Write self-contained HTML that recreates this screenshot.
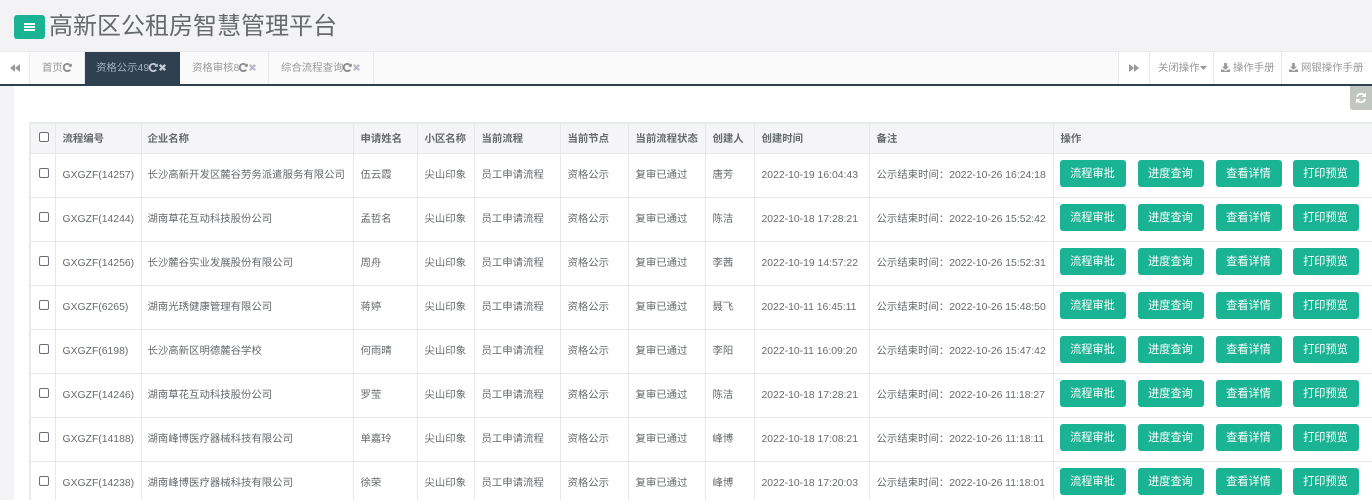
<!DOCTYPE html>
<html lang="zh"><head><meta charset="utf-8"><title>高新区公租房智慧管理平台</title>
<style>
*{box-sizing:border-box}
html,body{margin:0;padding:0;width:1372px;height:500px;overflow:hidden;background:#f3f3f5}
#wrap{position:relative;width:1372px;height:500px;overflow:hidden;background:#f3f3f5;font-family:"Liberation Sans","Noto Sans CJK SC",sans-serif;color:#676a6c}
.abs{position:absolute}
#menu{left:14px;top:15px;width:31px;height:24px;background:#1ab394;border-radius:3px}
#menu i{position:absolute;left:10px;width:11px;height:2px;background:#fff}
#title{left:49px;top:9px;font-size:24px;line-height:36px;color:#676a6c;white-space:nowrap}
#bar{left:0;top:51px;width:1372px;height:35px;background:#fafafa;border-top:1px solid #e7eaec;border-bottom:2px solid #2f4050}
.t{position:absolute;top:0;height:32px;line-height:33px;font-size:10.4px;color:#999;border-right:1px solid #e7eaec;white-space:nowrap}
.t.n{text-align:center}
.t svg{vertical-align:-1px}
#main{left:14px;top:86px;width:1358px;height:414px;background:#fff}
#rf{left:1350px;top:86px;width:22px;height:24px;background:#c2c6c2;border-radius:0 0 0 3px}
table{position:absolute;left:29px;top:122px;width:1400px;table-layout:fixed;border-collapse:collapse;font-size:10.4px;color:#676a6c}
td,th{border:1px solid #e7e7e7;padding:0 0 4px 7px;text-align:left;white-space:nowrap;overflow:hidden;font-weight:400;height:44px}
td.l{padding-bottom:0}
td.a{padding:0 0 2px 6px}
td:first-child,th:first-child{padding:0 0 2px 6px}
td:nth-child(3),th:nth-child(3){padding-left:6px}
tr:first-child th{height:30px;background:#f5f5f7;font-weight:700;border-top:2px solid #e7eaec;padding-bottom:2px}
td:first-child,th:first-child{border-left:2px solid #e7eaec}
.c{display:block;position:relative;top:0;width:10px;height:10px;border:1px solid #6d6d78;border-radius:2px;background:#fff;margin:-3px 0 0 2px}
th .c{top:1px}
b.b{display:inline-block;width:66px;height:27px;line-height:28px;margin-right:12px;background:#1ab394;color:#fff;font-size:11.2px;font-weight:400;text-align:center;border-radius:3px;vertical-align:middle;position:relative;top:-1px}
b.b:nth-child(3){margin-right:11px}
</style></head><body>
<div id="wrap">
<div class="abs" id="main"></div>
<div class="abs" id="menu"><i style="top:8px"></i><i style="top:11px"></i><i style="top:14px"></i></div>
<div class="abs" id="title">高新区公租房智慧管理平台</div>
<svg width="0" height="0" style="position:absolute"><defs>
<symbol id="rp" viewBox="0 0 10 10"><path d="M8 2.6A4 4 0 1 0 8 7.4" fill="none" stroke="currentColor" stroke-width="2"/><path d="M6 4.2L9.800 4.200 9.800.4z" fill="currentColor"/></symbol>
<symbol id="x" viewBox="0 0 10 10"><path d="M2 2L8 8M8 2L2 8" fill="none" stroke="currentColor" stroke-width="2.600"/></symbol>
<symbol id="dl" viewBox="0 0 10 10"><path d="M3.500 0h3v4H9L5 7.600 1 4h2.500zM0 7.200h2.300L5 9l2.700-1.800H10V10H0z" fill="currentColor"/></symbol>
</defs></svg>
<div class="abs" id="bar">
<div class="t n" style="left:0;width:30px;background:#fff"><svg width="10" height="8" viewBox="0 0 10 8"><path d="M5 0v8L0 4zM10 0v8L5 4z" fill="#999"/></svg></div>
<div class="t" style="left:30px;width:55px;padding-left:12px">首页<svg width="9" height="9" style="color:#888"><use href="#rp"/></svg></div>
<div class="t" style="left:85px;width:95px;padding-left:11px;background:#2f4050;color:#a7b1c2;border-right:0">资格公示49<svg width="9" height="9" style="color:#c4ccd8"><use href="#rp"/></svg><svg width="9" height="9" style="color:#c4ccd8"><use href="#x"/></svg></div>
<div class="t" style="left:180px;width:89px;padding-left:12px">资格审核8<svg width="9" height="9" style="color:#888"><use href="#rp"/></svg><svg width="9" height="9" style="color:#bbc"><use href="#x"/></svg></div>
<div class="t" style="left:269px;width:105px;padding-left:12px">综合流程查询<svg width="9" height="9" style="color:#888"><use href="#rp"/></svg><svg width="9" height="9" style="color:#bbc"><use href="#x"/></svg></div>
<div class="t n" style="left:1118px;width:32px;border-left:1px solid #e7eaec;background:#fff"><svg width="10" height="8" viewBox="0 0 10 8"><path d="M0 0v8l5-4zM5 0v8l5-4z" fill="#999"/></svg></div>
<div class="t" style="left:1150px;width:64px;padding-left:8px;background:#fff">关闭操作<svg width="7" height="4" viewBox="0 0 7 4" style="vertical-align:1px"><path d="M0 0h7L3.500 4z" fill="#999"/></svg></div>
<div class="t" style="left:1214px;width:68px;padding-left:7px;background:#fff"><svg width="9" height="9" style="margin-right:3px"><use href="#dl"/></svg>操作手册</div>
<div class="t" style="left:1282px;width:90px;padding-left:7px;background:#fff;border-right:0"><svg width="9" height="9" style="margin-right:3px"><use href="#dl"/></svg>网银操作手册</div>
</div>
<div class="abs" id="rf"><svg width="12" height="12" viewBox="0 0 12 12" style="position:absolute;left:5px;top:6px"><path d="M2 5A4.200 4.200 0 0 1 9.500 3.500M10 7A4.200 4.200 0 0 1 2.500 8.500" fill="none" stroke="#fff" stroke-width="1.800"/><path d="M11 .5V5H6.500zM1 11.500V7h4.500z" fill="#fff"/></svg></div>
<table>
<colgroup><col style="width:25px"><col style="width:86px"><col style="width:212px"><col style="width:64px"><col style="width:57px"><col style="width:86px"><col style="width:68px"><col style="width:77px"><col style="width:49px"><col style="width:115px"><col style="width:184px"><col style="width:377px"></colgroup>
<tr><th><span class="c"></span></th><th>流程编号</th><th>企业名称</th><th>申请姓名</th><th>小区名称</th><th>当前流程</th><th>当前节点</th><th>当前流程状态</th><th>创建人</th><th>创建时间</th><th>备注</th><th>操作</th></tr>
<tr><td><span class="c"></span></td><td class="l">GXGZF(14257)</td><td>长沙高新开发区麓谷劳务派遣服务有限公司</td><td>伍云霞</td><td>尖山印象</td><td>员工申请流程</td><td>资格公示</td><td>复审已通过</td><td>唐芳</td><td class="l">2022-10-19 16:04:43</td><td>公示结束时间：2022-10-26 16:24:18</td><td class="a"><b class="b">流程审批</b><b class="b">进度查询</b><b class="b">查看详情</b><b class="b">打印预览</b></td></tr>
<tr><td><span class="c"></span></td><td class="l">GXGZF(14244)</td><td>湖南草花互动科技股份公司</td><td>孟哲名</td><td>尖山印象</td><td>员工申请流程</td><td>资格公示</td><td>复审已通过</td><td>陈洁</td><td class="l">2022-10-18 17:28:21</td><td>公示结束时间：2022-10-26 15:52:42</td><td class="a"><b class="b">流程审批</b><b class="b">进度查询</b><b class="b">查看详情</b><b class="b">打印预览</b></td></tr>
<tr><td><span class="c"></span></td><td class="l">GXGZF(14256)</td><td>长沙麓谷实业发展股份有限公司</td><td>周舟</td><td>尖山印象</td><td>员工申请流程</td><td>资格公示</td><td>复审已通过</td><td>李茜</td><td class="l">2022-10-19 14:57:22</td><td>公示结束时间：2022-10-26 15:52:31</td><td class="a"><b class="b">流程审批</b><b class="b">进度查询</b><b class="b">查看详情</b><b class="b">打印预览</b></td></tr>
<tr><td><span class="c"></span></td><td class="l">GXGZF(6265)</td><td>湖南光琇健康管理有限公司</td><td>蒋婷</td><td>尖山印象</td><td>员工申请流程</td><td>资格公示</td><td>复审已通过</td><td>聂飞</td><td class="l">2022-10-11 16:45:11</td><td>公示结束时间：2022-10-26 15:48:50</td><td class="a"><b class="b">流程审批</b><b class="b">进度查询</b><b class="b">查看详情</b><b class="b">打印预览</b></td></tr>
<tr><td><span class="c"></span></td><td class="l">GXGZF(6198)</td><td>长沙高新区明德麓谷学校</td><td>何雨晴</td><td>尖山印象</td><td>员工申请流程</td><td>资格公示</td><td>复审已通过</td><td>李阳</td><td class="l">2022-10-11 16:09:20</td><td>公示结束时间：2022-10-26 15:47:42</td><td class="a"><b class="b">流程审批</b><b class="b">进度查询</b><b class="b">查看详情</b><b class="b">打印预览</b></td></tr>
<tr><td><span class="c"></span></td><td class="l">GXGZF(14246)</td><td>湖南草花互动科技股份公司</td><td>罗莹</td><td>尖山印象</td><td>员工申请流程</td><td>资格公示</td><td>复审已通过</td><td>陈洁</td><td class="l">2022-10-18 17:28:21</td><td>公示结束时间：2022-10-26 11:18:27</td><td class="a"><b class="b">流程审批</b><b class="b">进度查询</b><b class="b">查看详情</b><b class="b">打印预览</b></td></tr>
<tr><td><span class="c"></span></td><td class="l">GXGZF(14188)</td><td>湖南峰博医疗器械科技有限公司</td><td>单嘉玲</td><td>尖山印象</td><td>员工申请流程</td><td>资格公示</td><td>复审已通过</td><td>峰博</td><td class="l">2022-10-18 17:08:21</td><td>公示结束时间：2022-10-26 11:18:11</td><td class="a"><b class="b">流程审批</b><b class="b">进度查询</b><b class="b">查看详情</b><b class="b">打印预览</b></td></tr>
<tr><td><span class="c"></span></td><td class="l">GXGZF(14238)</td><td>湖南峰博医疗器械科技有限公司</td><td>徐荣</td><td>尖山印象</td><td>员工申请流程</td><td>资格公示</td><td>复审已通过</td><td>峰博</td><td class="l">2022-10-18 17:20:03</td><td>公示结束时间：2022-10-26 11:18:01</td><td class="a"><b class="b">流程审批</b><b class="b">进度查询</b><b class="b">查看详情</b><b class="b">打印预览</b></td></tr>
</table>
</div>
</body></html>
